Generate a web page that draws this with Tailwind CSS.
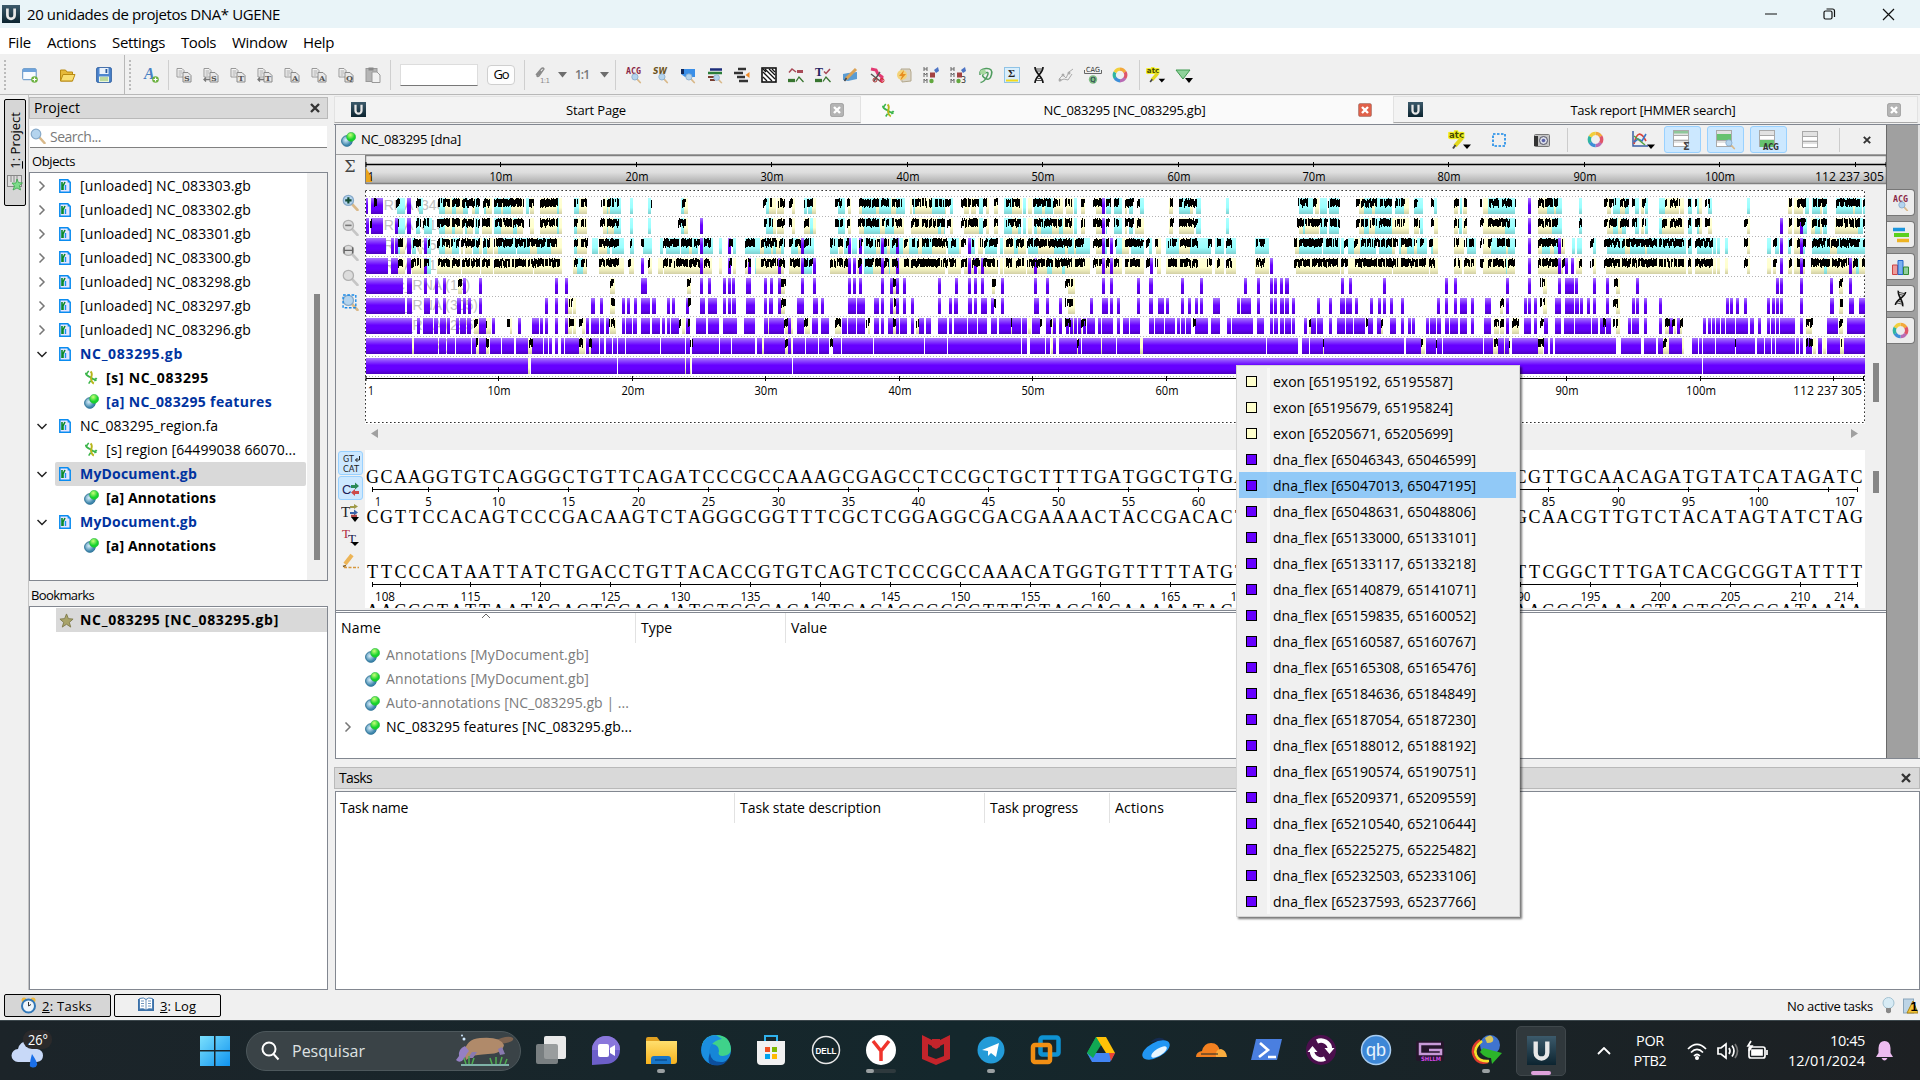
<!DOCTYPE html>
<html lang="pt-BR">
<head>
<meta charset="utf-8">
<title>20 unidades de projetos DNA* UGENE</title>
<script src="https://cdn.jsdelivr.net/npm/@tailwindcss/browser@4"></script>
</head>
<body class="w-[1920px] h-[1080px] overflow-hidden bg-[#f0f0f0] font-['Open_Sans','Noto_Sans',sans-serif] text-[14px] text-black leading-none">
<svg class="absolute w-0 h-0">
  <defs>
    <linearGradient id="gu" x2="0" y2="1"><stop stop-color="#3c5a6b"/><stop offset="1" stop-color="#0c2430"/></linearGradient>
    <linearGradient id="gp" x2="0" y2="1"><stop stop-color="#a878ff"/><stop offset=".45" stop-color="#6600ff"/><stop offset=".7" stop-color="#6600ff"/><stop offset="1" stop-color="#4c00bf"/></linearGradient>
    <linearGradient id="gy" x2="0" y2="1"><stop stop-color="#ffffd8"/><stop offset=".6" stop-color="#ffffcc"/><stop offset="1" stop-color="#d2cfa4"/></linearGradient>
    <linearGradient id="gc" x2="0" y2="1"><stop stop-color="#b0ffff"/><stop offset=".6" stop-color="#99ffff"/><stop offset="1" stop-color="#7fd0d0"/></linearGradient>
    <radialGradient id="gball" cx=".4" cy=".4"><stop stop-color="#d8eefa"/><stop offset="1" stop-color="#3f87ad"/></radialGradient>
    <radialGradient id="ggreen" cx=".4" cy=".3"><stop stop-color="#c8ff7a"/><stop offset="1" stop-color="#17d32c"/></radialGradient>
    <linearGradient id="gw" x2="1" y2="1"><stop stop-color="#7be0fd"/><stop offset="1" stop-color="#0f93ef"/></linearGradient>
    <linearGradient id="gfol" x2="0" y2="1"><stop stop-color="#ffdf6e"/><stop offset="1" stop-color="#f7b21d"/></linearGradient>
  </defs>
  <symbol id="u" viewBox="0 0 16 16"><rect width="16" height="16" fill="url(#gu)"/><path d="M4.8 3v6.2a3.2 3.2 0 0 0 6.4 0V3" fill="none" stroke="#e8e8e8" stroke-width="2.4"/></symbol>
  <symbol id="ann" viewBox="0 0 16 16"><circle cx="6.3" cy="9.6" r="5.7" fill="url(#gball)" stroke="#2f7397" stroke-width="1"/><circle cx="10.8" cy="5.2" r="4.8" fill="url(#ggreen)" stroke="#22b53a" stroke-width=".6"/></symbol>
  <symbol id="doc" viewBox="0 0 12 14"><path d="M.8.8h8L11.2 3.2V13.2H.8z" fill="#e6e6ff" stroke="#0a8cf0" stroke-width="1.5"/><path d="M8.6.5v3h3z" fill="#0a8cf0"/><path d="M3 3v8M6 3L4 7l0 4" stroke="#0b8a2b" stroke-width="1.6" fill="none"/><path d="M6.500 6v5" stroke="#1490f0" stroke-width="1.4"/></symbol>
  <symbol id="seq" viewBox="0 0 14 16"><path d="M1 3c0 4 3.500 3.500 6 5.500s4 2 5.500 0" fill="none" stroke="#3bb54a" stroke-width="2"/><path d="M6 1.500c3 2.500.5 5 .5 8 .3 2.500 1 4 3 5" fill="none" stroke="#b8b61a" stroke-width="2"/><path d="M1.500 4.500L4 1M10 11.500l2.500-1M4 14.500l2-3" stroke="#3bb54a" stroke-width="1.600"/></symbol>
  <symbol id="mag" viewBox="0 0 16 16"><path d="M9.500 9.500L14.500 15" stroke="#d9b98a" stroke-width="2.600" stroke-linecap="round"/><circle cx="6" cy="6" r="4.800" fill="#b4d4ee" stroke="#86a9c9" stroke-width="1.200"/></symbol>
  <symbol id="magg" viewBox="0 0 16 16"><path d="M9.500 9.500L14.500 15" stroke="#c6c6c6" stroke-width="2.600" stroke-linecap="round"/><circle cx="6" cy="6" r="4.800" fill="#dcdcdc" stroke="#b0b0b0" stroke-width="1.200"/></symbol>
  <symbol id="copy" viewBox="0 0 16 16"><path d="M1 1.500h5l2 2V10H1z" fill="#f4f4f4" stroke="#999"/><path d="M2.500 4h4M2.500 6h4M2.500 8h3" stroke="#aaa"/><path d="M7 5.500h5l3 3V15H7z" fill="#e8e8e8" stroke="#8a8a8a"/></symbol>
  <symbol id="ring" viewBox="0 0 16 16"><g fill="none" stroke-width="3.200"><path d="M8 2.200A5.800 5.800 0 0 1 13 5.200" stroke="#f3a83b"/><path d="M13 5.100a5.800 5.800 0 0 1-.3 6.200" stroke="#e0556a"/><path d="M12.800 11.200A5.800 5.800 0 0 1 8 13.800" stroke="#b86bb5"/><path d="M8 13.800a5.800 5.800 0 0 1-5-3" stroke="#3c8ed8"/><path d="M3.100 11A5.800 5.800 0 0 1 3 5.200" stroke="#30b5a2"/><path d="M3 5.300A5.800 5.800 0 0 1 8 2.200" stroke="#f1cf3c"/></g></symbol>
  <symbol id="close" viewBox="0 0 14 14"><rect x=".5" y=".5" width="13" height="13" rx="1.500" fill="currentColor" stroke="#0003"/><path d="M4 4l6 6M10 4l-6 6" stroke="#fff" stroke-width="2.400"/></symbol>
  <symbol id="x" viewBox="0 0 8 8"><path d="M.8.8l6.400 6.400M7.200.8L.8 7.200" stroke="#333" stroke-width="1.900"/></symbol>
  <symbol id="dna" viewBox="0 0 16 16"><path d="M4 0c0 7 8 9 8 16M12 0c0 7-8 9-8 16" fill="none" stroke="#111" stroke-width="1.700"/><path d="M4.500 2h7M5 13.500h6M6 4h4M6.500 11.500h4" stroke="#333" stroke-width=".9"/></symbol>
  <symbol id="atc" viewBox="0 0 24 20"><text x="1" y="8" font-family="DejaVu Sans" font-weight="bold" font-size="8.500" textLength="15" lengthAdjust="spacingAndGlyphs" fill="#4a4a00" stroke="#f0ee20" stroke-width="2.500" paint-order="stroke">atc</text><path d="M14 8L7 16" stroke="#e3d81c" stroke-width="4"/><path d="M7.500 15L5 18.500" stroke="#444" stroke-width="2"/><path d="M15 14.500h8l-4 4.500z" fill="#000"/></symbol>
  <symbol id="win" viewBox="0 0 16 18"><rect x=".5" y=".5" width="15" height="16" fill="#fff" stroke="#a9a9a9"/><path d="M1 1h14v4H1zM1 9h14v4H1z" fill="#e2e2e2"/><path d="M0 5.500h16M0 10.500h16" stroke="#a9a9a9"/></symbol>
</svg>

<div class="flex flex-col h-[1080px]">
  <!-- title bar -->
  <div class="h-[28px] shrink-0 bg-[#e9f4f8] flex items-center pl-[2px]">
    <svg class="w-[18px] h-[22px]" viewBox="0 0 18 22" preserveAspectRatio="none"><use href="#u" y="2" width="18" height="18"/></svg>
    <span data-w="253" class="ml-[7px] text-[15px]">20 unidades de projetos DNA* UGENE</span>
    <svg class="ml-auto w-[140px] h-[16px] mr-[22px]" viewBox="0 0 140 16" fill="none" stroke="#111" stroke-width="1.200"><path d="M7 8h12M125 3l11 11M136 3l-11 11"/><rect x="66" y="5" width="8" height="8" rx="1.500"/><path d="M68.500 3h6q2 0 2 2v6"/></svg>
  </div>
  <!-- menu bar -->
  <div class="h-[27px] shrink-0 bg-white flex items-center pt-[3px] text-[15px] pl-[8px] border-b border-[#f0f0f0]">
    <span data-w="23" class="mr-[16px]">File</span><span data-w="49" class="mr-[16px]">Actions</span><span data-w="53" class="mr-[16px]">Settings</span><span data-w="35" class="mr-[16px]">Tools</span><span data-w="55" class="mr-[16px]">Window</span><span data-w="31">Help</span>
  </div>
  <!-- toolbar -->
  <div class="h-[40px] shrink-0 flex items-center border-b border-[#b8b8b8] pl-[4px] pb-0">
    <div class="h-[30px] border-l-2 border-dotted border-[#bbb] mr-[16px]"></div>
    <svg class="w-[16px] h-[16px] mr-[21px]" viewBox="0 0 16 16"><rect x=".7" y="1.700" width="13.500" height="11" rx="1" fill="#f7fbff" stroke="#5b8fc4"/><path d="M1 2h13v3H1z" fill="#6ea3dc"/><circle cx="12.500" cy="12.500" r="3.300" fill="#6bb13f"/><path d="M12.500 10.500v4M10.500 12.500h4" stroke="#fff" stroke-width="1.200"/></svg>
    <svg class="w-[17px] h-[16px] mr-[20px]" viewBox="0 0 16 16"><path d="M1 3h5l1.500 2H13v9H1z" fill="#e6b93a" stroke="#b98a12"/><path d="M3.500 7.500H15.500L13 14H1z" fill="#f9de72" stroke="#b98a12"/></svg>
    <svg class="w-[16px] h-[16px] mr-[12px]" viewBox="0 0 16 16"><rect x=".7" y=".7" width="14.600" height="14.600" rx="1" fill="#4d86cf" stroke="#2b5c9e"/><rect x="3.500" y="1" width="9" height="6" fill="#eaf2fb"/><rect x="3" y="9.500" width="10" height="5.500" fill="#e9f6dc"/><path d="M4 11h8M4 13h8" stroke="#8dbb5e"/><rect x="9.500" y="2" width="1.800" height="4" fill="#2b5c9e"/></svg>
    <div class="w-px h-full bg-[#b8b8b8] mr-[4px]"></div>
    <div class="h-[30px] border-l-2 border-dotted border-[#bbb] mr-[12px]"></div>
    <svg class="w-[16px] h-[16px] mr-[9px]" viewBox="0 0 16 16"><text x="1" y="12" font-family="Liberation Serif" font-style="italic" font-weight="bold" font-size="16" fill="#4880c4">A</text><circle cx="12.500" cy="12.500" r="3.300" fill="#6bb13f"/><path d="M12.500 10.500v4M10.500 12.500h4" stroke="#fff" stroke-width="1.200"/></svg>
    <div class="w-px h-[30px] bg-[#cfcfcf] mr-[2px]"></div>
    <div id="copies" class="flex"></div>
    <svg class="w-[16px] h-[16px] mx-[5px]" viewBox="0 0 16 16"><rect x="1" y="1.500" width="11" height="13" fill="#b5b5b5" stroke="#999"/><rect x="3.500" y=".5" width="5" height="3" fill="#888"/><path d="M7 5h5l3 3v7.500H7z" fill="#f2f2f2" stroke="#999"/></svg>
    <div class="w-px h-[30px] bg-[#cfcfcf] ml-[4px] mr-[9px]"></div>
    <div class="w-[78px] h-[22px] bg-white border border-[#ddd] border-b-[#777]"></div>
    <div class="ml-[9px] w-[28px] h-[20px] rounded-[4px] border border-[#cfcfcf] bg-[#fdfdfd] flex items-center justify-center text-[13px]"><span data-w="15">Go</span></div>
    <div class="w-px h-[30px] bg-[#cfcfcf] ml-[9px] mr-[8px]"></div>
    <svg class="w-[18px] h-[18px]" viewBox="0 0 18 18"><path d="M3 9l5-6q2-2 3 0l-5 7q-1.500 1-2 0l4-5" fill="none" stroke="#8a8a8a" stroke-width="1.400"/><text x="7" y="17" font-family="DejaVu Sans" font-size="7" textLength="10" fill="#8a8a8a">1:1</text></svg>
    <svg class="w-[9px] h-[6px] ml-[7px] mr-[8px]" viewBox="0 0 9 6"><path d="M0 0h9L4.500 5.500z" fill="#6d6d6d"/></svg>
    <span data-w="14" class="text-[12px] font-semibold text-[#777]">1:1</span>
    <svg class="w-[9px] h-[6px] ml-[11px] mr-[6px]" viewBox="0 0 9 6"><path d="M0 0h9L4.500 5.500z" fill="#6d6d6d"/></svg>
    <div class="w-px h-[30px] bg-[#cfcfcf] mr-[4px]"></div>
    <div class="flex *:w-4 *:h-4 *:mx-[5.5px] *:overflow-visible">
      <svg viewBox="0 0 16 16"><text x="0" y="7" font-family="DejaVu Sans Mono" font-weight="bold" font-size="8" textLength="15" lengthAdjust="spacingAndGlyphs" fill="#8a2746">ACG</text><g transform="translate(5 6) scale(.65)"><use href="#mag" width="16" height="16"/></g></svg>
      <svg viewBox="0 0 16 16"><text x="0" y="7" font-family="DejaVu Sans" font-weight="bold" font-style="italic" font-size="9" textLength="14" lengthAdjust="spacingAndGlyphs" fill="#6b5320">SW</text><g transform="translate(5 6) scale(.65)"><use href="#mag" width="16" height="16"/></g></svg>
      <svg viewBox="0 0 16 16"><path d="M1 2h14v8H5L1 7z" fill="#3a8fe8"/><path d="M1 2h3v5H1z" fill="#10285a"/><g transform="translate(5 6) scale(.65)"><use href="#mag" width="16" height="16"/></g></svg>
      <svg viewBox="0 0 16 16"><path d="M3 2.500h12" stroke="#1c2d7a" stroke-width="2.500"/><path d="M1 6h14" stroke="#2a7d3a" stroke-width="2.500"/><path d="M1 10h8M3 13h5" stroke="#7a3e31" stroke-width="2"/><g transform="translate(6 7) scale(.6)"><use href="#mag" width="16" height="16"/></g></svg>
      <svg viewBox="0 0 16 16"><path d="M4 2h8M0 6h9M3 10h8M5 14h9" stroke="#333" stroke-width="2.600"/><path d="M15.500 5v6l-4-3z" fill="#f08a24"/></svg>
      <svg viewBox="0 0 16 16"><rect x="1" y="1" width="14" height="14" fill="#fff" stroke="#111" stroke-width="1.600"/><path d="M2 5l9 9M2 10l4 4M4 2l10 10M8 2l6 6M11 2l3 3M2 2l3 3" stroke="#111" stroke-width="1.300"/></svg>
      <svg viewBox="0 0 16 16"><path d="M1 5.500l3-3.500 4 3" fill="none" stroke="#a84a57" stroke-width="1.500"/><path d="M9 4.500h6" stroke="#a84a57" stroke-width="3"/><path d="M0 13.500h7" stroke="#37752f" stroke-width="3.300"/><path d="M8 14.500l3-4.500 4.500 5" stroke="#37752f" stroke-width="1.300" fill="none"/></svg>
      <svg viewBox="0 0 16 16"><text x="0" y="9" font-family="Liberation Serif" font-weight="bold" font-size="12" fill="#23235e">T</text><path d="M9 4.500l2 2 4-4.500" fill="none" stroke="#a84a57" stroke-width="1.500"/><path d="M0 13.500h7" stroke="#37752f" stroke-width="3.300"/><path d="M8 14.500l3-4.500 4.500 5" stroke="#37752f" stroke-width="1.300" fill="none"/></svg>
      <svg viewBox="0 0 16 16"><path d="M1 7l5-1 9-1v7l-9 2-5-1z" fill="#5b9cd2"/><path d="M4 12L14 2" stroke="#dba255" stroke-width="3"/><path d="M2.500 14l2-3" stroke="#444" stroke-width="1.500"/></svg>
      <svg viewBox="0 0 16 16"><path d="M2 2l5 1 2 4 4 3-1 5" stroke="#e23a72" stroke-width="3" fill="none"/><path d="M2 7l9 7M11 5l-6 9" stroke="#555" stroke-width="1.400"/><circle cx="6" cy="13" r="2" stroke="#a33" fill="none"/><circle cx="13" cy="13.500" r="2" stroke="#c33" fill="none"/></svg>
      <svg viewBox="0 0 16 16"><path d="M5 2h9l1 3v9l-9 1z" fill="#d9d4c8" stroke="#b4a88c"/><circle cx="6" cy="8" r="5" fill="#f3d37a"/><path d="M8 3L3 9h3l-2 5 6-7H7z" fill="#e88d1f"/></svg>
      <svg viewBox="0 0 16 16"><g id="hmm"><path d="M1 0v4M4 0v4M1 2h3M1 10V6l1.500 2L4 6v4M1 16v-4l1.500 2L4 12v4" stroke="#666" stroke-width="1" fill="none"/><path d="M11 3l4-3 1 4-3 2z" fill="#4d74c4"/><rect x="7" y="5.500" width="5" height="5" fill="#a34242"/><circle cx="8.500" cy="14" r="2.200" fill="#62a83f"/></g></svg>
      <svg viewBox="0 0 16 16"><use href="#hmm"/><text x="11" y="16" font-family="DejaVu Sans" font-size="8" fill="#333">3</text></svg>
      <svg viewBox="0 0 16 16"><path d="M3 8q-1-6 6-6.500t5.500 6-6 4-2-4.500 4-1.500-1 5-6 5" fill="none" stroke="#4f9c5e" stroke-width="1.500"/><ellipse cx="6" cy="5" rx="3" ry="2.500" fill="#a8d9a0"/></svg>
      <svg viewBox="0 0 16 16"><rect x=".5" y=".5" width="15" height="15" fill="#d9eefb" stroke="#8fc3e6"/><text x="4" y="10" font-family="Liberation Serif" font-weight="bold" font-size="11" fill="#222">Σ</text><path d="M2 13.500h12" stroke="#f0da1d" stroke-width="2"/></svg>
      <svg viewBox="0 0 16 16"><use href="#dna"/></svg>
      <svg viewBox="0 0 16 16"><path d="M1 12l4-4 3 3 3-6 4-3M1 14l5-2 4 1 4-6" fill="none" stroke="#aaa"/><circle cx="5" cy="8" r="1.500" fill="#aaa"/><circle cx="11" cy="6" r="1.500" fill="#aaa"/><circle cx="2" cy="13" r="1.500" fill="#aaa"/></svg>
      <svg viewBox="0 0 16 16"><text x="1" y="5" font-family="DejaVu Sans" font-size="7" textLength="14" lengthAdjust="spacingAndGlyphs" fill="#333">CAG</text><path d="M-.5 3v3.500h17V3" fill="none" stroke="#666"/><circle cx="8" cy="12.500" r="4.200" fill="#7fbd84"/><text x="5.300" y="15" font-family="DejaVu Sans" font-size="7" fill="#124">Q</text></svg>
      <svg viewBox="0 0 16 16"><use href="#ring"/></svg>
    </div>
    <div class="w-px h-[30px] bg-[#cfcfcf] ml-[6px] mr-[6px]"></div>
    <svg class="w-[20px] h-[18px] mr-[9px]"><use href="#atc"/></svg>
    <svg class="w-[18px] h-[16px]" viewBox="0 0 18 16"><path d="M1 3h14l-7 9z" fill="#8fd19a" stroke="#3f9b50"/><path d="M10 11h8l-4 5z"/></svg>
  </div>

  <!-- workspace -->
  <div class="flex-1 min-h-0 flex">
    <div class="w-[29px] shrink-0 border-r border-[#c4c4c4]">
      <div class="ml-[4px] mt-[4px] w-[22px] h-[107px] bg-[#d6d6d6] border-[1.5px] border-black rounded-[2px] flex flex-col items-center">
        <span class="[writing-mode:vertical-rl] rotate-180 mt-[12px] text-[13px] leading-[16px]"><u>1</u>: Project</span>
        <svg class="w-[16px] h-[16px] mt-[6px]" viewBox="0 0 16 16"><rect x=".5" y=".5" width="14" height="11" fill="#ddd" stroke="#888"/><path d="M4 1v6M7 1v6M10 1v6" stroke="#888"/><path d="M10 4l1.500 3.500 4 .5-3 2.500 1 4.500-3.500-2-4 2 1.500-4-2.500-3h4z" fill="#7ddc8a" stroke="#2f9e44" stroke-width=".7"/></svg>
      </div>
    </div>
    <!-- project panel -->
    <div class="w-[305px] shrink-0 flex flex-col pt-[2px] pr-[6px]">
      <div class="h-[22px] bg-[#d9d9d9] border border-[#b9b9b9] flex items-center pl-[4px] pr-[7px] pt-px justify-between text-[14px]"><span data-w="46">Project</span><svg class="w-[10px] h-[10px]"><use href="#x"/></svg></div>
      <div class="mt-[7px] ml-px mr-[1px] h-[22px] bg-white border-b border-[#808080] flex items-center text-[#7a7a7a] text-[14px]"><svg class="w-[16px] h-[16px]"><use href="#mag"/></svg><span data-w="51" class="ml-[4px] pt-px">Search...</span></div>
      <div class="h-[24px] pl-[3px] pt-[4px] flex items-center text-[13px]"><span data-w="43">Objects</span></div>
      <div class="h-[410px] border border-[#828790] bg-white flex">
        <div id="tree" class="w-[277px] pt-px"></div>
        <div class="w-[20px] bg-[#f0f0f0] pt-[121px] pl-[7px]"><div class="w-[6px] h-[266px] bg-[#868686]"></div></div>
      </div>
      <div class="h-[25px] pl-[2px] pt-[4px] flex items-center text-[13px]"><span data-w="63">Bookmarks</span></div>
      <div class="h-[384px] border border-[#828790] bg-white pt-px">
        <div class="ml-[26px] h-[24px] bg-[#d9d9d9] flex items-center pl-[3px] font-bold"><svg class="w-[15px] h-[15px]" viewBox="0 0 16 16"><path d="M8 1l2 5 5 .5-4 3.500 1.500 5L8 12l-4.500 3L5 10 1 6.500 6 6z" fill="#a9a46a" stroke="#807c4e"/></svg><span data-w="199" class="ml-[6px]">NC_083295 [NC_083295.gb]</span></div>
      </div>
    </div>
    <!-- main -->
    <div class="flex-1 min-w-0 flex flex-col">
      <div class="h-[30px] shrink-0 border-b border-[#828790] flex items-stretch text-[13px] pt-px">
        <div class="w-[527px] mb-px bg-[#f3f3f3] border border-[#e2e2e2] border-b-[#a8a8a8] flex items-center pl-[16px] pr-[16px] justify-between"><svg class="w-[15px] h-[15px]"><use href="#u"/></svg><span data-w="60" class="relative -left-[2px] pt-[2px]">Start Page</span><svg class="w-[14px] h-[14px] text-[#b4b4b4]"><use href="#close"/></svg></div>
        <div class="w-[532px] bg-[#fafafa] flex items-center pl-[21px] pr-[21px] justify-between"><svg class="w-[13px] h-[15px]"><use href="#seq"/></svg><span data-w="162" class="relative -left-[2px]">NC_083295 [NC_083295.gb]</span><svg class="w-[14px] h-[14px] text-[#e0614a]"><use href="#close"/></svg></div>
        <div class="flex-1 mr-[2px] mb-px bg-[#f3f3f3] border border-[#e2e2e2] border-b-[#a8a8a8] flex items-center pl-[14px] pr-[16px] justify-between"><svg class="w-[15px] h-[15px]"><use href="#u"/></svg><span data-w="165" class="relative -left-[2px] pt-[2px]">Task report [HMMER search]</span><svg class="w-[14px] h-[14px] text-[#b4b4b4]"><use href="#close"/></svg></div>
      </div>
      <div class="h-[634px] shrink-0 flex border-l border-[#828790] ml-px border-b border-b-[#828790]">
        <div class="w-[1551px] flex flex-col border-r border-[#696969]">
          <!-- sequence header -->
          <div class="h-[30px] shrink-0 border-b border-[#a0a0a0] flex items-center pl-[5px]">
            <svg class="w-[15px] h-[15px]"><use href="#ann"/></svg>
            <span data-w="100" class="ml-[5px] text-[13px]">NC_083295 [dna]</span>
            <div class="ml-auto mr-[15px] flex items-center">
              <svg class="w-[24px] h-[20px] mr-[20px]"><use href="#atc"/></svg>
              <svg class="w-[14px] h-[14px] mr-[28px]" viewBox="0 0 14 14"><rect x="1" y="1" width="12" height="12" fill="none" stroke="#1688e8" stroke-width="1.600" stroke-dasharray="2.500 1.500"/></svg>
              <svg class="w-[16px] h-[14px] mr-[17px]" viewBox="0 0 16 14"><rect x=".5" y="1.500" width="15" height="12" rx="1" fill="#c4c4c4" stroke="#777"/><path d="M0 3h4v10H0z" fill="#333"/><circle cx="9.500" cy="7.500" r="4" fill="#d8dce8" stroke="#556"/><circle cx="9.500" cy="7.500" r="1.800" fill="#5b62a8"/></svg>
              <div class="w-px h-[24px] bg-[#ccc] mr-[19px]"></div>
              <svg class="w-[17px] h-[17px] mr-[27px]"><use href="#ring"/></svg>
              <svg class="w-[24px] h-[20px] mr-[9px]" viewBox="0 0 24 20"><path d="M2 1v15h15" fill="none" stroke="#3a5fa5" stroke-width="1.500"/><path d="M3 14Q7-4 15 11" stroke="#d9453b" fill="none" stroke-width="1.700"/><path d="M3 12l4-3 4 2 4-7" stroke="#3a78c9" fill="none" stroke-width="1.600"/><path d="M3 6l11 9" stroke="#55a345" stroke-width="1.500"/><path d="M16 14.500h8l-4 4.500z"/></svg>
              <div class="w-[37px] h-[27px] rounded-[3px] bg-[#cce8ff] border border-[#99d1ff] flex items-center justify-center mr-[6px]"><svg class="w-[20px] h-[20px]" viewBox="0 0 20 20"><use href="#win" width="16" height="18"/><path d="M1 1h14v2.500H1z" fill="#8fc79a"/><text x="10" y="19.500" font-family="DejaVu Sans" font-weight="bold" font-size="10" fill="#444">Σ</text></svg></div>
              <div class="w-[37px] h-[27px] rounded-[3px] bg-[#cce8ff] border border-[#99d1ff] flex items-center justify-center mr-[6px]"><svg class="w-[20px] h-[20px]" viewBox="0 0 20 20"><use href="#win" width="16" height="18"/><path d="M1 4h14v6H1z" fill="#66c26f"/><g transform="translate(9 9) scale(.65)"><use href="#mag" width="16" height="16"/></g></svg></div>
              <div class="w-[37px] h-[27px] rounded-[3px] bg-[#cce8ff] border border-[#99d1ff] flex items-center justify-center mr-[15px]"><svg class="w-[20px] h-[20px]" viewBox="0 0 20 20"><use href="#win" width="16" height="18"/><path d="M1 10h14v7H1z" fill="#66c26f"/><text x="4" y="19.500" font-family="DejaVu Sans" font-weight="bold" font-size="8" textLength="16" lengthAdjust="spacingAndGlyphs" fill="#333">ACG</text></svg></div>
              <svg class="w-[16px] h-[18px] mr-[21px]"><use href="#win"/></svg>
              <div class="w-px h-[24px] bg-[#ccc] mr-[23px]"></div>
              <svg class="w-[8px] h-[8px]"><use href="#x"/></svg>
            </div>
          </div>
          <div class="h-[455px] shrink-0 flex overflow-hidden">
            <div class="w-[29px] shrink-0 flex flex-col items-center pt-[3px] pr-px">
              <div class="text-[16px] text-[#444] h-[18px] leading-[18px] font-['DejaVu_Serif',serif] mb-[18px]">Σ</div>
              <svg class="w-[17px] h-[17px] mb-[8px]" viewBox="0 0 16 16"><use href="#mag"/><path d="M3 6h6M6 3v6" stroke="#124a35" stroke-width="2"/></svg>
              <svg class="w-[17px] h-[17px] mb-[8px]" viewBox="0 0 16 16"><use href="#magg"/><path d="M3 6h6" stroke="#777" stroke-width="1.500"/></svg>
              <svg class="w-[17px] h-[17px] mb-[8px]" viewBox="0 0 16 16"><use href="#magg"/><path d="M2 3v6M10 3v6M2 6h8" stroke="#666" stroke-width="1.300"/></svg>
              <svg class="w-[17px] h-[17px] mb-[8px]" viewBox="0 0 16 16"><use href="#magg"/></svg>
              <svg class="w-[17px] h-[17px] mb-[140px]" viewBox="0 0 16 16"><use href="#mag"/><rect x="1" y="1" width="12" height="12" fill="none" stroke="#1688e8" stroke-width="1.300" stroke-dasharray="2.500 1.500"/></svg>
              <div class="w-[25px] h-[24px] mb-px rounded-[3px] bg-[#cce8ff] border border-[#99d1ff]"><svg viewBox="0 0 23 22" font-family="DejaVu Sans" font-size="8" fill="#222"><text x="4" y="10" textLength="11" lengthAdjust="spacingAndGlyphs">GT</text><path d="M20.500 4v4h-4m2-2l-2 2 2 2" fill="none" stroke="#222"/><text x="4" y="20" textLength="16" lengthAdjust="spacingAndGlyphs">CAT</text></svg></div>
              <div class="w-[25px] h-[24px] rounded-[3px] bg-[#cce8ff] border border-[#99d1ff]"><svg viewBox="0 0 23 22"><text x="3" y="17" font-family="Liberation Sans" font-size="13" fill="#1c1c55">C</text><path d="M12 8h4V5.500l4 3.500-4 3.500V11h-4z" fill="#2b8a57"/><path d="M20 14h-4v-2l-4 3.500 4 3.500V17h4z" fill="#cc4a4a"/></svg></div>
              <svg class="w-[19px] h-[18px] mt-[4px]" viewBox="0 0 19 18"><text x="0" y="13" font-family="Liberation Serif" font-size="15" fill="#222">T</text><path d="M9 2h4V0l4 2.500L13 5V4H9z" fill="#a09b4a"/><path d="M9 8h4V5.500l4 3-4 3V10H9z" fill="#3a62a8"/><path d="M10 12h6" stroke="#b14444" stroke-width="2.500"/><path d="M10 13h8l-4 5z"/></svg>
              <svg class="w-[19px] h-[18px] mt-[6px]" viewBox="0 0 19 18"><text x="1" y="10" font-family="Liberation Serif" font-size="13" fill="#b22b3b">T</text><text x="7" y="15" font-family="Liberation Serif" font-size="13" fill="#15154a">T</text><path d="M10 14h8l-4 4z"/></svg>
              <svg class="w-[17px] h-[16px] mt-[7px]" viewBox="0 0 17 16"><path d="M3 11L10 2" stroke="#ecb456" stroke-width="4"/><path d="M1 13.500l3-1" stroke="#805a1e" stroke-width="1.500"/><path d="M2 14.500h15" stroke="#d6973c" stroke-width="1.500" stroke-dasharray="3 1.500"/></svg>
            </div>
            <div class="w-[1521px] flex flex-col">
              <svg id="overview" class="w-[1522px] h-[295px] block shrink-0" viewBox="365 155 1522 295"></svg>
              <div class="flex">
                <svg id="detail" class="w-[1500px] h-[158px] bg-white block" viewBox="365 450 1500 158"></svg>
                <div class="ml-[8px] mt-[21px] w-[6px] h-[22px] bg-[#868686]"></div>
              </div>
            </div>
          </div>
          <!-- annotation tree -->
          <div class="flex-1 bg-white border-t-[3px] border-double border-[#828790] text-[14px]">
            <div class="relative h-[30px] flex items-center">
              <div class="w-[300px] h-full pl-[5px] border-r border-[#e2e2e2] flex items-center"><span data-w="40">Name</span></div>
              <div class="w-[150px] h-full pl-[5px] border-r border-[#e2e2e2] flex items-center"><span data-w="31">Type</span></div>
              <span data-w="36" class="ml-[5px]">Value</span>
              <svg class="absolute left-[145px] top-0 w-[10px] h-[6px]" viewBox="0 0 10 6"><path d="M1 5l4-4 4 4" fill="none" stroke="#666"/></svg>
            </div>
            <div id="anns"></div>
          </div>
        </div>
        <!-- right strip -->
        <div class="flex-1 bg-[#a0a0a0] pt-[64px] border-r-2 border-[#e0e0e0]">
          <div class="flex flex-col gap-[5px] *:w-[28px] *:h-[27px] *:bg-[#ececec] *:rounded-r-[4px] *:border *:border-[#777] *:border-l-0 *:flex *:items-center *:justify-center">
            <div><svg class="w-[16px] h-[16px]" viewBox="0 0 16 16"><text x="0" y="7" font-family="DejaVu Sans Mono" font-weight="bold" font-size="8" textLength="15" lengthAdjust="spacingAndGlyphs" fill="#8a2746">ACG</text><g transform="translate(5 6) scale(.65)"><use href="#mag" width="16" height="16"/></g></svg></div>
            <div><svg class="w-[16px] h-[16px]" viewBox="0 0 16 16"><path d="M0 2.500h12" stroke="#1b95dc" stroke-width="3.500"/><path d="M1 8h15" stroke="#5ad01e" stroke-width="4"/><path d="M4 13.500h12" stroke="#edb322" stroke-width="3.500"/></svg></div>
            <div><svg class="w-[17px] h-[16px]" viewBox="0 0 17 16"><path d="M.5 6h5v9.500h-5z" fill="#ee9a9a" stroke="#c44"/><path d="M6 1.500h5v14H6z" fill="#7ab0f0" stroke="#26c"/><path d="M11.500 8h5v7.500h-5z" fill="#8fcf9c" stroke="#383"/></svg></div>
            <div><svg class="w-[15px] h-[15px] rotate-12"><use href="#dna"/></svg></div>
            <div><svg class="w-[17px] h-[17px]"><use href="#ring"/></svg></div>
          </div>
        </div>
      </div>
      <!-- tasks dock -->
      <div class="mt-[8px] h-[22px] shrink-0 bg-[#d9d9d9] border border-[#b9b9b9] flex items-center justify-between pl-[4px] pr-[8px]"><span data-w="33" class="text-[14px]">Tasks</span><svg class="w-[10px] h-[10px]"><use href="#x"/></svg></div>
      <div class="flex-1 mt-[2px] ml-px bg-white border border-[#828790] text-[14px]">
        <div class="flex h-[31px] pt-px items-center *:h-full *:flex *:items-center *:border-r *:border-[#e2e2e2]">
          <div class="w-[399px] pl-[4px]"><span data-w="68">Task name</span></div>
          <div class="w-[250px] pl-[5px]"><span data-w="141">Task state description</span></div>
          <div class="w-[125px] pl-[5px]"><span data-w="88">Task progress</span></div>
          <div class="w-[200px] pl-[5px] !border-0"><span data-w="49">Actions</span></div>
        </div>
      </div>
    </div>
  </div>

  <!-- status bar -->
  <div class="h-[30px] shrink-0 flex items-center pl-[4px] pr-[2px] text-[13px]">
    <div class="w-[107px] h-[23px] bg-[#d6d6d6] border-[1.5px] border-black rounded-[2px] flex items-center pl-[15px] mr-[3px]"><svg class="w-[17px] h-[17px] mr-[5px]" viewBox="0 0 17 17"><circle cx="4" cy="3" r="2.500" fill="#f0b93c"/><circle cx="13" cy="3" r="2.500" fill="#f0b93c"/><circle cx="8.500" cy="9" r="6.500" fill="#eef5fb" stroke="#3278b8" stroke-width="2"/><path d="M8.500 5v4l2.500-1.500" stroke="#333" fill="none"/></svg><span data-w="50" class="pt-[2px]"><u>2</u>: Tasks</span></div>
    <div class="w-[107px] h-[23px] border-[1.5px] border-black rounded-[2px] flex items-center pl-[23px]"><svg class="w-[16px] h-[16px] mr-[6px]" viewBox="0 0 16 16"><path d="M0 2h16v12H0z" fill="#3a70a8"/><path d="M1.500 1.500Q6 0 8 2.500 10 0 14.500 1.500V12Q10 11 8 13 6 11 1.500 12z" fill="#fff" stroke="#4d7fb3"/><path d="M8 2.500V13M3 4h3M3 6.500h3M3 9h3M10 4h3M10 6.500h3M10 9h3" stroke="#6e94bb"/></svg><span data-w="36" class="pt-[2px]"><u>3</u>: Log</span></div>
    <span data-w="86" class="ml-auto mr-[8px] pt-[2px]">No active tasks</span>
    <svg class="w-[15px] h-[17px] mr-[7px]" viewBox="0 0 15 17"><circle cx="7.500" cy="6" r="5.500" fill="#d7ebf5" stroke="#a3c2d1"/><path d="M5 11h5v4q-2.500 2.500-5 0z" fill="#888"/></svg>
    <svg class="w-[15px] h-[17px]" viewBox="0 0 15 17"><rect x=".5" y="2" width="10" height="14" fill="#bcd4e6" stroke="#8aa6bb"/><path d="M10 4l5 12H4z" fill="#f3c63a" stroke="#a88316"/><text x="7.500" y="14" font-size="13" font-weight="bold" font-family="Liberation Sans">1</text></svg>
  </div>

  <!-- taskbar -->
  <div class="h-[60px] shrink-0 bg-gradient-to-r from-[#1c2429] via-[#14272c] to-[#1d2023] border-t border-[#3c474c] flex items-center text-white">
    <svg class="w-[46px] h-[44px] ml-[10px] shrink-0" viewBox="0 0 46 44"><path d="M8 33a6.500 6.500 0 0 1 0-13q2-8 10-8t9 8q6 1 6 6.500T27 33z" fill="#c8d9f8"/><path d="M22 25q6 9 5 11-1 3-4.500 2.500T20 35q0-3 2-10z" fill="#1a6fe8"/><rect x="13" y="1" width="29" height="19" rx="9" fill="#2b2a2b"/><text x="18" y="16" font-family="Open Sans" font-size="15" textLength="20" lengthAdjust="spacingAndGlyphs" fill="#fff">26°</text></svg>
    <svg class="w-[30px] h-[30px] ml-[144px] shrink-0" viewBox="0 0 30 30"><path d="M0 0h14v14H0zM15.500 0H30v14H15.500zM0 15.500h14V30H0zM15.500 15.500H30V30H15.500z" fill="url(#gw)"/></svg>
    <div class="ml-[16px] w-[275px] h-[40px] shrink-0 rounded-full bg-[#3a4347] border border-[#4d585c] flex items-center pl-[14px] text-[16px] text-[#dfe2e3]">
      <svg class="w-[19px] h-[20px] shrink-0" viewBox="0 0 19 20" fill="none" stroke="#fff" stroke-width="2"><circle cx="8" cy="8" r="6.500"/><path d="M12.500 13l5 5.500"/></svg>
      <span data-w="73" class="ml-[12px] leading-[22px]">Pesquisar</span>
      <svg class="w-[58px] h-[34px] ml-auto mr-[6px] shrink-0" viewBox="0 0 58 34"><path d="M36 8Q52 0 57 4q2 4-12 6z" fill="#7d6350"/><path d="M8 19Q10 5 24 4q20-2 24 7-2 9-16 9-12 1-16 2l-6 4z" fill="#b08a6a"/><path d="M9 12q-7 3-6 10l-3 4q4 4 8-1 3-6 5-8z" fill="#9580c4"/><path d="M16 18l-4 6h5l4-6zM42 15l2 6 5-1-3-7z" fill="#8a7ab0"/><path d="M5 31h48" stroke="#7fb2a8" stroke-width="2"/><path d="M10 30l-2-6M13 30v-8M16 30l2-6M36 30l-2-6M40 30v-7M44 30l2-7M49 30l2-5" stroke="#4fae52" stroke-width="1.500"/><circle cx="8" cy="5" r="1.500" fill="#cfe8ff"/><circle cx="6" cy="1.500" r="1" fill="#cfe8ff"/></svg>
    </div>
    <div class="ml-[14px] flex shrink-0 *:w-[32px] *:h-[48px] *:mr-[23px] *:shrink-0 *:overflow-visible">
      <svg viewBox="0 0 32 48"><rect x="9" y="9" width="22" height="23" rx="2" fill="#e9e9e9"/><rect x="1" y="17" width="22" height="20" rx="2" fill="#8b8f90" opacity=".85"/></svg>
      <svg viewBox="0 0 32 48"><path d="M2 38V23A14 14 0 1 1 16 37z" fill="#6c5fc9"/><path d="M16 9a14 14 0 0 1 14 14H2A14 14 0 0 1 16 9z" fill="#8a77db"/><rect x="8" y="17" width="11" height="13" rx="2" fill="#fff"/><path d="M20 21l5-3v11l-5-3z" fill="#fff"/></svg>
      <svg viewBox="0 0 32 48"><path d="M1 12q0-2 2-2h9l3 4h16v22H1z" fill="#e0a021"/><path d="M1 14h31v20q0 3-3 3H1z" fill="url(#gfol)"/><path d="M6 37v-5q0-3 3-3h14q3 0 3 3v5z" fill="#1976c8"/><path d="M10 33h12" stroke="#0b4f92" stroke-width="1.500"/><rect x="12" y="42" width="8" height="4" rx="2" fill="#9aa0a2"/></svg>
      <svg viewBox="0 0 32 48"><circle cx="16" cy="23" r="15" fill="#1686d8"/><path d="M2 18Q5 8 16 8q14 0 15 14 0 6-8 7-6 0-4-5 0-6-7-7-7 0-10 8z" fill="#3fd28a"/><path d="M2 18Q5 8 16 8l6 4q-14 2-13 18 2 5 6 8Q0 36 2 18z" fill="#1b8ee0"/><path d="M10 26q1 10 13 9 4-1 6-4-6 11-19 6-3-4 0-11z" fill="#0c4f9e"/></svg>
      <svg viewBox="0 0 32 48"><path d="M10 15V9h12v6" fill="none" stroke="#2fb1ec" stroke-width="2"/><path d="M2 14h28v20q0 4-4 4H6q-4 0-4-4z" fill="#f1f1f1"/><path d="M10 20h5v5h-5z" fill="#f25022"/><path d="M17 20h5v5h-5z" fill="#7fba00"/><path d="M10 27h5v5h-5z" fill="#00a4ef"/><path d="M17 27h5v5h-5z" fill="#ffb900"/></svg>
      <svg viewBox="0 0 32 48"><circle cx="16" cy="23" r="13.500" fill="none" stroke="#e8e8e8" stroke-width="1.500"/><text x="5.500" y="26.500" font-family="Liberation Sans" font-weight="bold" font-size="9.500" textLength="21" lengthAdjust="spacingAndGlyphs" fill="#fff">DELL</text></svg>
      <svg viewBox="0 0 32 48"><circle cx="16" cy="23" r="15" fill="#fff"/><path d="M8 14l8 10 8-10M16 23v11" fill="none" stroke="#f0342c" stroke-width="3.500"/><rect x="1" y="42" width="30" height="4" rx="2" fill="#2e393d"/><rect x="1" y="42" width="8" height="4" rx="2" fill="#9aa0a2"/></svg>
      <svg viewBox="0 0 32 48"><path d="M2 8l14 7 14-7v24l-14 6-14-6z" fill="#c4242b"/><path d="M8 17l8 4 8-4v12l-8 3-8-3z" fill="#1a262a"/><path d="M12 12h8v8l-4 2-4-2z" fill="#c4242b"/></svg>
      <svg viewBox="0 0 32 48"><circle cx="16" cy="23" r="13.500" fill="#239bd8"/><path d="M7 23l17-7-3 14-5-4-3 3v-5z" fill="#fff"/><rect x="12" y="42" width="8" height="4" rx="2" fill="#9aa0a2"/></svg>
      <svg viewBox="0 0 32 48" fill="none" stroke-width="4.500"><rect x="10.500" y="10.500" width="18" height="17" rx="2" stroke="#0e92d2"/><rect x="3" y="18" width="17" height="17" rx="2" stroke="#f18f14"/></svg>
      <svg viewBox="0 0 32 48"><path d="M11 10h10L11 34l-4 0-5-8z" fill="#11a853"/><path d="M11 10h10l9 16H20z" fill="#ffc107"/><path d="M2 26h28l-5 9H7z" fill="#4285f4"/><path d="M11 10l5 8-8 13-6-5z" fill="#11a853"/><path d="M24 26h6l-4 8z" fill="#ea4335"/><path d="M11 26l5-8 5 8z" fill="#15262b"/></svg>
      <svg viewBox="0 0 32 48"><path d="M10 15q10-8 16-1z" fill="#152c52"/><ellipse cx="16" cy="23" rx="15" ry="7.500" transform="rotate(-28 16 23)" fill="#2196f3"/><ellipse cx="19" cy="25" rx="9" ry="3.500" transform="rotate(-32 19 25)" fill="#e8f6ff"/></svg>
      <svg viewBox="0 0 32 48"><path d="M1 30q0-5 6-6 2-8 9-8 8 0 9 9v5z" fill="#f38020"/><path d="M21 30q-1-8 5-8 5 1 6 8z" fill="#faad3f"/><path d="M6 27h17" stroke="#1a262a" stroke-width="1"/></svg>
      <svg viewBox="0 0 32 48"><path d="M6 12h26l-5 21H1z" fill="#4a7fe0"/><path d="M10 16l8 7-9 7M18 30h8" fill="none" stroke="#fff" stroke-width="2.600"/></svg>
      <svg viewBox="0 0 32 48"><circle cx="16" cy="23" r="15" fill="#4b0f4d"/><path d="M12 14.500A9 9 0 0 1 25 22M20 31.500A9 9 0 0 1 7 24" fill="none" stroke="#fff" stroke-width="4.500"/><path d="M2.500 25l5-6 5 6zM19.500 21l5 6 5-6z" fill="#fff"/></svg>
      <svg viewBox="0 0 32 48"><circle cx="16" cy="23" r="14.500" fill="#3d87d6" stroke="#a9cdf0" stroke-width="1.500"/><text x="6" y="29" font-family="Liberation Sans" font-size="18" textLength="20" lengthAdjust="spacingAndGlyphs" fill="#e8f3fc">qb</text></svg>
      <svg viewBox="0 0 32 48"><rect x="1" y="14" width="28" height="20" rx="2" fill="#25152b"/><path d="M26 17H5v10h21v-4H14" fill="none" stroke="#c79ad8" stroke-width="2.500"/><text x="6" y="34" font-family="DejaVu Sans" font-weight="bold" font-size="6" textLength="20" lengthAdjust="spacingAndGlyphs" fill="#d04be8">SHLLM</text></svg>
      <svg viewBox="0 0 32 48"><circle cx="20" cy="18" r="10" fill="#3f74cf"/><path d="M15 11q6-5 8 0t-6 5z" fill="#d9c55a"/><path d="M10 13Q0 20 4 29t14 6" fill="none" stroke="#e23b2e" stroke-width="2.500"/><path d="M12 14Q3 21 6 28t13 6" fill="none" stroke="#f4e02c" stroke-width="2.500"/><path d="M13 21l19 5-10 11-1-6q-6 0-11-6z" fill="#2cb52a"/><rect x="12" y="42" width="8" height="4" rx="2" fill="#9aa0a2"/></svg>
    </div>
    <div class="-ml-[9px] w-[50px] h-[50px] shrink-0 rounded-[5px] bg-[#30383c] border border-[#3f474b] flex flex-col items-center pt-[9px]"><svg class="w-[29px] h-[29px]"><use href="#u"/></svg><div class="mt-[6px] w-[20px] h-[4px] rounded-full bg-[#dea2dc]"></div></div>
    <svg class="w-[14px] h-[8px] ml-auto" viewBox="0 0 14 8"><path d="M1 7l6-6 6 6" fill="none" stroke="#fff" stroke-width="1.800"/></svg>
    <div class="ml-[22px] w-[34px] text-center text-[14.5px] leading-[20px]"><span data-w="28">POR</span><br><span data-w="33">PTB2</span></div>
    <svg class="w-[82px] h-[22px] ml-[20px]" viewBox="0 0 82 22" fill="none" stroke="#fff" stroke-width="1.700"><path d="M1 9q9-9 18 0M4 12.500q6-6 12 0M7 16q3-3 6 0"/><circle cx="10" cy="18" r="1.200" fill="#fff"/><path d="M31 8h3l5-4v14l-5-4h-3zM42 8q2 3 0 6M45 5.500q4 5.500 0 11"/><path d="M48 4q5 7 0 14" stroke="#777"/><rect x="62" y="7" width="16" height="11" rx="2"/><path d="M65 10h10v5H65z" fill="#fff"/><path d="M80 10v5M64 1l-3 5h4l-3 5"/></svg>
    <div class="ml-[14px] w-[82px] text-right text-[14.5px] leading-[20px]"><span data-w="35">10:45</span><br><span data-w="77">12/01/2024</span></div>
    <svg class="w-[17px] h-[20px] ml-[11px] mr-[27px]" viewBox="0 0 17 20"><path d="M8.500 0Q14 0 14.500 7v5l2.500 4H0l2.500-4V7Q3 0 8.500 0zM5.500 17h6q-3 5-6 0z" fill="#edbcf0"/></svg>
  </div>
</div>

<!-- annotation context menu -->
<div id="menu" class="absolute left-[1236px] top-[365px] w-[284px] h-[552px] bg-[#f0f0f0] border border-[#d5d5d5] shadow-[2px_2px_2px_#0008] pt-[2px] px-[2px]"></div>

<script>
const $ = id => document.getElementById(id);

$('copies').innerHTML = ['S','S','T','T','A','A','Q'].map((c, i) =>
  `<svg class="w-[16px] h-[16px] ml-[5px] mr-[6px] shrink-0" viewBox="0 0 16 16"><use href="#copy"/><text x="8" y="14" font-family="DejaVu Serif" font-weight="bold" font-size="8" fill="#555">${c}</text>${i == 1 || i == 3 ? '<path d="M1 12.500h6M3 10.500l-2 2 2 2" fill="none" stroke="#777" stroke-width="1.300"/>' : ''}</svg>`).join('');

const chev = open => open
  ? '<svg class="w-[10px] h-[10px]" viewBox="0 0 10 10"><path d="M.5 3L5 7.500 9.500 3" fill="none" stroke="#222" stroke-width="1.500"/></svg>'
  : '<svg class="w-[10px] h-[10px]" viewBox="0 0 10 10"><path d="M2.500.5L7 5 2.500 9.500" fill="none" stroke="#777" stroke-width="1.500"/></svg>';
const docs = ['303','302','301','300','298','297','296'].map(n => [0, '[unloaded] NC_083' + n + '.gb', 171]);
const rows = [...docs,
  [1, 'NC_083295.gb', 103, 'font-bold text-[#0033a0]'],
  ['seq', '[s] NC_083295', 103, 'font-bold'],
  ['ann', '[a] NC_083295 features', 166, 'font-bold text-[#0033a0]'],
  [1, 'NC_083295_region.fa', 138, ''],
  ['seq', '[s] region [64499038 66070...', 190, ''],
  [1, 'MyDocument.gb', 117, 'font-bold text-[#0033a0]', 'bg-[#d9d9d9]'],
  ['ann', '[a] Annotations', 110, 'font-bold'],
  [1, 'MyDocument.gb', 117, 'font-bold text-[#0033a0]'],
  ['ann', '[a] Annotations', 110, 'font-bold']];
$('tree').innerHTML = rows.map(([k, t, w, cls = '', sel = '']) => typeof k == 'number'
  ? `<div class="flex h-[24px] items-center pl-[7px]">${chev(k)}<div class="ml-[8px] pl-[4px] w-[251px] h-[24px] rounded-[2px] flex items-center ${sel}"><svg class="w-[12px] h-[14px]"><use href="#doc"/></svg><span data-w="${w}" class="ml-[9px] text-[14px] ${cls}">${t}</span></div></div>`
  : `<div class="flex h-[24px] items-center pl-[54px]"><svg class="w-[15px] h-[15px]"><use href="#${k}"/></svg><span data-w="${w}" class="ml-[7px] text-[14px] ${cls}">${t}</span></div>`).join('');

$('anns').innerHTML = [['Annotations [MyDocument.gb]', 203], ['Annotations [MyDocument.gb]', 203], ['Auto-annotations [NC_083295.gb | ...', 243], ['NC_083295 features [NC_083295.gb...', 246]].map(([t, w], i) =>
  `<div class="flex h-[24px] items-center pl-[7px] ${i < 3 ? 'text-[#7b7b7b]' : ''}"><span class="w-[22px]">${i == 3 ? chev(0) : ''}</span><svg class="w-[15px] h-[15px]"><use href="#ann"/></svg><span data-w="${w}" class="ml-[6px]">${t}</span></div>`).join('');

$('menu').innerHTML = ['65195192, 65195587','65195679, 65195824','65205671, 65205699','65046343, 65046599','65047013, 65047195','65048631, 65048806','65133000, 65133101','65133117, 65133218','65140879, 65141071','65159835, 65160052','65160587, 65160767','65165308, 65165476','65184636, 65184849','65187054, 65187230','65188012, 65188192','65190574, 65190751','65209371, 65209559','65210540, 65210644','65225275, 65225482','65232503, 65233106','65237593, 65237766'].map((t, i) =>
  `<div class="h-[26px] flex items-center pl-[7px] w-[277px] ${i == 4 ? 'bg-[#91c9f7]' : ''}"><div class="w-[11px] h-[11px] border border-black ${i < 3 ? 'bg-[#ffffcc]' : 'bg-[#6600ff]'}"></div><div class="ml-[10px] w-[3px] h-full ${i == 4 ? 'bg-white/5' : 'bg-[#f8f8f8]'}"></div><span data-w="${i < 3 ? 180 : 203}" class="ml-[3px] pt-px text-[14px]">${i < 3 ? 'exon' : 'dna_flex'} [${t}]</span></div>`).join('');

// Annotation segments per row, in three tiles: [origin x, units per pixel, rows].
// p = dna_flex, y = exon, c = gene, b = arrow markers.
const tiles = [
 [330, 2.8, [
  'p100-105 115-148 216-227 c188-210 248-260 305-322 342-352 372-385 405-416 430-437 460-480 484-508 549-557 636-642 682-698 774-778 784-815 840-848 890-898 984-992 1222-1230 1328-1336 1338-1350 1422-1442 1490-1568 y322-342 352-372 398-405 437-453 480-484 508-540 560-570 588-636 642-650 698-702 704-720 764-774 778-784 992-1001 1230-1249 1252-1272 1294-1301 1350-1360 1450-1458 1482-1490 1530-1536 b122-131 186-195 242-254 302-334 342-364 370-384 386-398 400-418 428-446 460-496 498-542 558-570 588-637 682-694 702-718 758-770 775-808 898-901 985-996 1212-1222 1228-1240 1254-1272 1286-1296 1328-1352 1414-1436 1448-1456 1480-1516 1518-1536 1542-1568',
  'p100-110 114-148 182-190 216-227 1036-1044 c190-210 242-252 262-284 305-322 342-352 378-384 405-416 460-480 512-524 636-642 682-692 774-778 795-815 840-848 890-898 984-992 1222-1240 1343-1352 1422-1442 1494-1568 y322-342 350-372 384-400 425-453 480-512 524-540 560-570 588-636 642-650 692-702 704-720 764-774 778-795 992-1001 1240-1249 1252-1272 1294-1301 1327-1343 1352-1360 1450-1458 1480-1494 1540-1546 b112-117 189-195 240-254 260-276 300-334 342-364 370-398 400-418 426-446 462-508 512-542 556-566 588-637 682-694 702-718 756-770 775-808 898-901 975-996 1212-1222 1228-1240 1252-1272 1286-1296 1328-1343 1414-1436 1448-1456 1478-1496 1502-1536 1542-1568',
  'p100-157 171-178 182-190 216-227 263-272 1036-1044 1114-1122 1319-1327 1450-1459 1481-1490 1543-1551 c190-196 230-242 272-283 305-330 342-360 400-416 428-440 470-520 524-560 580-620 640-644 682-690 734-750 775-785 790-822 840-850 876-902 924-932 940-980 984-1030 1044-1072 1090-1098 1128-1137 1162-1250 1262-1272 1290-1310 1327-1356 1400-1422 1440-1450 1462-1476 1495-1530 y196-210 248-256 322-342 366-372 378-398 418-426 440-455 460-470 560-580 620-650 692-720 752-775 1004-1012 1205-1215 1236-1240 1250-1262 1310-1319 1424-1436 1530-1543 1551-1568 b190-202 232-254 274-278 300-334 340-362 368-396 398-418 428-446 460-512 518-548 552-635 682-694 702-720 752-780 782-808 840-848 868-878 932-948 950-975 984-1036 1046-1066 1118-1126 1162-1190 1206-1250 1256-1272 1286-1296 1302-1318 1326-1346 1400-1414 1422-1434 1446-1452 1480-1490 1498-1518 1526-1568',
  'p100-162 171-190 216-227 263-272 871-879 1036-1044 1114-1122 1170-1179 1254-1262 1319-1327 1352-1361 1450-1459 1464-1473 1481-1490 1543-1551 c272-283 692-708 1190-1194 1327-1350 1495-1520 y190-210 230-262 300-366 370-420 424-455 460-568 572-650 680-692 708-720 752-824 836-850 890-902 918-932 934-1036 1044-1070 1090-1098 1128-1137 1162-1170 1194-1254 1262-1272 1285-1319 1400-1450 1476-1481 1520-1543 1551-1568 b190-202 228-254 264-276 300-334 342-364 370-396 398-418 426-446 460-504 510-548 553-642 682-692 702-718 752-780 782-808 834-842 890-894 932-956 962-1036 1046-1066 1118-1124 1162-1178 1206-1252 1256-1272 1286-1314 1326-1352 1400-1436 1440-1450 1478-1490 1498-1522 1526-1568',
  'p100-204 216-229 263-272 294-302 316-325 372-381 417-426 630-638 658-666 871-888 1036-1044 1058-1066 1100-1108 1114-1122 1126-1134 1165-1179 1215-1224 1232-1240 1254-1262 1319-1327 1352-1361 1450-1459 1464-1473 1481-1490 1543-1551 y358-368 784-797 1000-1010 1264-1275 b358-368 784-794 1000-1010 1264-1275',
  'p100-210 216-229 263-280 294-302 316-325 356-367 372-381 386-395 417-426 602-610 630-638 658-666 731-742 756-764 818-826 832-840 851-860 871-896 902-913 944-952 958-966 997-1005 1036-1050 1058-1068 1070-1084 1100-1108 1114-1122 1126-1138 1165-1190 1215-1224 1229-1240 1254-1264 1308-1327 1352-1366 1375-1383 1450-1473 1476-1498 1523-1537 1543-1551 y666-676 680-689 784-797 1264-1275 b670-682 784-796 1002-1010 1264-1275',
  'p100-230 244-252 260-288 291-302 307-325 328-336 353-362 365-381 384-395 417-437 454-462 526-535 566-585 588-596 602-610 630-638 658-666 716-725 731-753 756-766 773-781 818-826 829-846 848-860 871-896 902-924 930-938 944-952 955-978 997-1008 1025-1053 1058-1089 1100-1124 1126-1140 1159-1190 1215-1226 1229-1272 1282-1291 1308-1327 1350-1366 1375-1397 1434-1448 1450-1473 1476-1498 1523-1537 1543-1551 1563-1568 y402-417 437-450 503-510 666-676 680-689 706-714 784-800 985-995 1227-1229 1274-1282 1291-1295 1330-1343 1414-1432 1506-1513 b402-412 437-441 495-503 670-682 698-706 782-796 978-988 1003-1008 1272-1280 1328-1336 1414-1430 1500-1510',
  'p100-230 235-302 305-325 328-350 353-395 398-409 417-437 448-479 482-515 521-554 566-596 599-610 613-622 630-638 647-655 658-697 716-725 731-753 756-766 773-790 793-803 806-826 829-924 927-994 997-1008 1014-1089 1092-1124 1126-1189 1196-1210 1215-1275 1282-1291 1296-1330 1333-1366 1369-1397 1408-1431 1434-1520 1523-1568 y230-235 409-417 437-445 554-564 697-714 726-731 1210-1215 1275-1281 1291-1294 b409-414 438-444 556-566 698-708 725-731 1008-1014 1274-1280 1400-1408',
  'p100-554 563-804 806-994 997-1008 1014-1294 1296-1568 y554-560 994-997 1008-1010']],
 [880, 2.904, [
  'p645-653 c0-32 45-73 95-101 150-188 203-212 288-299 360-382 415-424 447-470 478-502 564-572 655-670 680-702 722-734 756-767 868-900 918-931 1005-1013 1217-1257 1277-1299 1304-1333 1405-1430 1438-1486 1495-1512 1552-1568 y32-45 88-94 101-150 188-193 244-257 264-280 309-316 331-342 382-412 430-440 470-478 505-530 540-560 584-594 627-645 712-718 840-850 900-910 1264-1275 1391-1405 1430-1438 1512-1536 b2-26 36-62 91-134 142-150 160-178 184-204 236-250 256-287 299-310 328-340 366-408 444-496 502-522 538-556 584-594 618-642 655-668 680-694 712-736 746-756 842-852 868-922 1212-1242 1256-1268 1300-1333 1382-1392 1398-1442 1452-1486 1496-1508 1514-1530 1550-1568',
  'p645-653 c15-40 168-178 186-190 288-299 360-382 400-410 415-424 447-455 468-500 520-532 564-572 655-660 680-702 722-734 918-931 1005-1013 1228-1235 1277-1299 1304-1333 1405-1420 1438-1486 1552-1560 y0-15 40-70 90-168 178-186 203-212 244-287 309-316 331-342 382-400 430-440 455-468 500-520 532-560 584-594 627-645 712-718 740-767 840-850 868-912 1217-1228 1235-1275 1391-1405 1420-1438 1486-1536 b2-26 36-62 91-138 142-162 166-188 194-204 236-250 256-287 299-310 328-340 366-408 444-472 476-526 538-556 584-594 618-642 655-668 680-694 712-736 746-756 842-852 868-922 1212-1282 1288-1333 1382-1392 1398-1416 1424-1442 1448-1486 1496-1508 1514-1530 1550-1568',
  'p3-12 46-54 256-264 645-653 668-677 c0-3 12-20 30-46 54-68 84-110 122-150 197-228 264-275 305-340 348-357 388-400 430-460 505-536 545-562 570-610 653-660 684-702 728-767 782-790 830-868 900-960 974-998 1004-1034 1089-1130 1217-1282 1286-1336 1339-1346 1360-1440 1450-1488 1507-1568 y20-30 68-84 110-122 150-190 228-236 284-300 360-388 400-425 460-505 536-545 562-570 627-645 704-722 800-815 868-900 1204-1217 1376-1394 1488-1496 b12-26 36-50 70-80 94-100 106-116 122-148 152-197 206-220 236-250 266-272 288-312 316-340 366-386 396-416 428-444 446-512 514-556 566-592 618-642 655-664 682-688 712-764 772-782 798-806 836-862 870-902 906-922 950-962 978-990 1006-1022 1092-1118 1202-1286 1296-1328 1348-1358 1376-1388 1398-1430 1436-1464 1468-1486 1490-1504 1514-1568',
  'p3-12 46-54 256-264 273-282 293-301 447-456 645-653 668-677 784-792 1132-1141 c26-30 485-500 528-536 y12-26 30-46 54-190 197-236 244-256 264-273 284-293 301-342 348-357 360-424 428-447 456-485 500-528 536-610 627-645 653-668 677-702 710-767 805-815 830-963 974-998 1004-1034 1089-1130 1208-1300 1302-1336 1339-1346 1360-1486 1490-1568 b12-26 36-50 70-82 91-174 178-204 206-220 236-250 266-288 300-340 366-386 394-416 426-512 514-556 566-594 618-642 655-666 680-694 712-754 772-784 798-806 836-862 870-902 906-922 950-962 978-990 1006-1022 1092-1118 1202-1300 1302-1328 1338-1358 1376-1462 1464-1486 1488-1504 1512-1568',
  'p3-12 29-38 46-54 67-75 168-177 218-226 256-264 273-282 293-301 351-360 447-456 482-491 645-653 668-677 746-755 782-792 874-883 929-938 1057-1066 1095-1103 1132-1141 1144-1153 1161-1170 1176-1188 1339-1347 1362-1371 1461-1469 y38-45 325-334 545-566 b38-45 325-336 538-558',
  'p3-12 29-38 46-54 67-75 90-99 168-177 200-209 215-226 256-267 273-282 293-311 322-332 351-360 447-462 482-491 520-528 610-618 645-662 668-677 688-697 746-755 781-793 807-825 830-839 874-883 894-903 915-923 929-938 967-987 1037-1045 1048-1077 1095-1103 1132-1141 1144-1153 1161-1173 1176-1188 1196-1205 1269-1278 1304-1312 1336-1350 1353-1371 1379-1388 1423-1432 1447-1455 1461-1469 1481-1490 1513-1522 y38-45 545-566 b38-45 332-336 538-558',
  'p3-12 23-38 46-54 58-78 90-99 112-128 134-148 168-195 200-209 215-253 256-282 284-311 322-340 346-380 383-409 412-427 441-465 482-496 502-511 520-528 540-550 552-560 562-572 575-585 588-598 601-624 633-642 645-677 688-697 706-723 726-755 781-796 799-825 828-857 862-871 874-886 889-903 915-952 961-987 1008-1019 1022-1083 1095-1115 1132-1141 1144-1155 1161-1173 1176-1193 1196-1205 1231-1240 1251-1266 1269-1286 1304-1312 1327-1350 1353-1373 1376-1408 1417-1432 1443-1455 1481-1498 1513-1522 1533-1542 1545-1554 y38-45 104-112 380-383 430-438 498-502 560-562 585-588 1246-1251 1455-1461 b38-45 104-112 380-383 466-469 494-498 537-552 584-597 908-915 1246-1250 1411-1417 1455-1459',
  'p0-128 131-195 197-409 412-427 436-479 482-494 502-511 520-572 575-584 587-643 645-685 688-755 764-1121 1124-1214 1225-1246 1249-1286 1289-1522 1527-1568 y496-502 572-575 643-645 756-764 1286-1289 b572-575 1286-1289',
  'p0-1568']],
 [1400, 3, [
  'p384-393 c3-12 51-69 102-111 180-186 264-345 440-462 468-486 537-546 640-660 675-687 705-717 735-744 777-795 864-876 890-897 924-936 1041-1050 1215-1227 1236-1260 1270-1280 1308-1360 1366-1386 1389-1394 y12-27 162-174 189-201 249-264 414-440 462-468 621-633 660-675 723-732 795-837 840-852 897-906 1164-1176 1182-1209 1260-1266 1360-1366 b3-15 42-54 94-102 162-177 192-201 240-248 264-296 304-336 344-347 414-432 436-474 612-624 628-650 660-687 696-705 726-736 794-800 810-840 864-872 886-890 914-930 1166-1176 1190-1216 1236-1250 1254-1280 1308-1378 1388-1394',
  'p384-393 1140-1149 1200-1209 c60-69 176-186 315-345 455-486 537-546 640-654 665-678 705-717 735-744 777-786 864-876 890-897 1209-1221 1245-1260 1270-1280 1375-1389 y0-27 42-57 102-114 162-174 189-201 249-315 414-455 621-640 654-665 723-732 786-852 897-906 924-936 1041-1050 1164-1176 1182-1200 1233-1245 1260-1266 1306-1375 b3-15 42-54 94-102 162-177 192-201 240-252 264-328 344-347 414-432 436-474 537-546 612-624 628-650 660-687 696-710 726-736 786-800 810-844 864-872 886-900 914-930 1032-1042 1166-1176 1190-1216 1236-1250 1254-1280 1308-1378 1388-1394',
  'p384-393 474-483 1140-1149 1200-1209 c21-42 51-81 92-99 201-228 273-318 325-345 425-450 462-474 516-525 530-546 579-588 621-675 690-735 741-858 864-876 890-936 938-948 951-960 975-984 1101-1113 1125-1137 1164-1173 1209-1215 1236-1290 1310-1394 y3-21 42-51 99-114 162-192 249-273 318-325 414-425 450-462 483-495 675-690 735-741 1041-1050 1182-1200 1290-1310 b3-36 38-50 60-72 86-98 162-177 192-201 206-222 240-252 264-274 290-332 344-347 414-474 486-490 570-580 612-660 666-770 778-850 864-872 886-938 1032-1042 1120-1130 1166-1176 1190-1200 1208-1216 1236-1290 1294-1378 1388-1394',
  'p384-393 474-483 495-504 513-522 1140-1149 1200-1209 1347-1356 c318-322 1272-1281 1368-1377 y3-87 90-114 162-186 192-228 249-318 322-345 414-474 483-490 528-546 579-588 618-858 864-876 884-936 938-948 951-960 975-984 1041-1050 1101-1113 1120-1128 1164-1176 1182-1200 1209-1215 1233-1272 1281-1347 1356-1368 1377-1394 b3-50 52-78 86-104 162-180 192-222 240-252 264-316 324-344 414-474 486-494 537-546 570-580 612-660 666-770 778-850 864-872 886-938 1032-1042 1120-1130 1166-1176 1190-1200 1208-1216 1234-1290 1296-1346 1358-1374 1386-1394',
  'p135-144 162-171 318-327 384-393 474-483 495-522 525-534 579-588 618-627 708-717 1128-1137 1140-1149 1200-1209 1290-1299 1347-1356 y429-441 648-660 1317-1328 b420-434 639-654 1317-1327',
  'p3-12 111-120 135-144 162-171 180-201 213-222 255-273 318-327 372-381 384-393 402-411 465-483 495-522 525-537 540-549 561-570 579-588 618-627 696-705 708-717 732-741 777-786 978-987 990-999 1008-1017 1032-1041 1101-1110 1116-1125 1128-1137 1140-1149 1200-1209 1290-1302 1347-1362 1377-1394 y300-309 429-441 648-660 1317-1328 b300-310 420-434 639-654 1317-1327',
  'p3-12 24-33 36-45 78-87 90-108 111-123 135-147 150-174 180-201 213-222 252-273 318-327 372-393 402-411 432-444 465-483 492-522 525-573 576-594 600-615 618-633 684-693 696-717 732-741 777-786 807-819 831-840 909-918 924-933 936-945 948-960 963-975 978-1005 1008-1044 1050-1062 1074-1083 1101-1110 1114-1125 1128-1137 1140-1185 1200-1209 1281-1314 1341-1394 y282-297 300-312 336-357 648-660 795-807 822-828 840-846 1218-1236 1317-1328 b282-296 300-312 336-356 420-432 609-618 639-654 795-808 816-824 840-848 1218-1238 1317-1327',
  'p0-12 18-63 78-108 111-126 129-249 252-279 294-312 315-327 336-414 432-445 450-459 465-648 663-723 732-768 774-788 807-846 876-894 897-906 909-945 948-1005 1008-1065 1071-1092 1095-1113 1116-1125 1128-1185 1188-1197 1200-1209 1218-1236 1254-1266 1281-1319 1333-1394 y63-75 279-294 312-315 327-330 414-428 789-806 846-852 1239-1248 1269-1278 1320-1332 b64-69 108-111 249-252 279-294 327-330 414-432 789-804 1005-1008 1113-1116 1218-1238 1320-1332',
  'p0-906 909-1394']]];

let seed = 7;
const rnd = () => (seed = (seed * 16807) % 2147483647) / 2147483647;
const txt = (x, y, s, o = '') => `<text x="${x}" y="${y}" ${o}>${s}</text>`;
let g = `<defs><linearGradient id="rul" x2="0" y2="1"><stop stop-color="#f2f2f2"/><stop offset=".6" stop-color="#dedede"/><stop offset="1" stop-color="#a9a9a9"/></linearGradient></defs>
<rect x="366" y="155" width="1520" height="29" fill="url(#rul)"/><path d="M365.500 184V155.500H1887M366 183.500H1886.500V156" fill="none" stroke="#808080" stroke-width="1.500"/>
<path d="M366 164.500H1887" stroke="#000" stroke-width="1.300"/><path d="M366 168l6 9v5h-6z" fill="#eaa51c"/>
<rect x="365" y="190" width="1500" height="234" fill="#fff"/><rect x="365.500" y="190.500" width="1499" height="232" fill="none" stroke="#000" stroke-dasharray="1.300 2.700"/>`;
const F = 'font-family="Open Sans" font-size="13.500" text-anchor="middle"';
const lab = (x, y, s, w) => txt(x, y, s, `${F} textLength="${w}" lengthAdjust="spacingAndGlyphs"`);
const tick = (x, y) => `<path d="M${x} ${y - 2.500}v5" stroke="#000"/>`;
g += tick(366, 164.500) + lab(371, 181, '1', 6);
[500.500,636.500,771.500,907.500,1042.500,1178.500,1313.500,1448.500,1584.500,1719.500].forEach((x, i) => g += tick(x, 164.500) + lab(x + .5, 181, (i + 1) + '0m', i == 9 ? 30 : 23));
g += tick(1855.500, 164.500) + tick(1886, 164.500) + lab(1849.500, 181, '112 237 305', 69);
for (let r = 0; r < 10; r++) g += `<path d="M366 ${196.500 + r * 20}H1864" stroke="#b4b4b4" stroke-dasharray="1 2"/>`;
['mRNA (346)','mRNA (315)','mRNA (358)','mRNA (318)','misc_RNA (15)','misc_RNA (305)','misc_RNA (295)','dna_flex (8)'].forEach((s, i) =>
  g += txt(i < 4 ? 372 : 376, 210 + i * 20, s, 'font-family="Liberation Sans" font-size="14" fill="#c0c0c0"'));
const grad = { p: 'url(#gp)', y: 'url(#gy)', c: 'url(#gc)' };
tiles.forEach(([ox, s, rws]) => rws.forEach((row, r) => {
  const y = 198 + r * 20;
  let k = 'p', marks = '';
  row.split(' ').forEach(tok => {
    if (/[a-z]/.test(tok[0])) { k = tok[0]; tok = tok.slice(1); }
    const [a, b] = tok.split('-').map(v => ox + v / s);
    if (k != 'b') g += `<rect x="${a.toFixed(1)}" y="${y}" width="${(b - a).toFixed(1)}" height="16" fill="${grad[k]}" shape-rendering="crispEdges"/>`;
    else for (let x = Math.round(a), n = 0; x < b; x++, n++) {
      const m = n % 5, top = m == 0 ? rnd() * 3 : rnd() * 1.500;
      const h = m == 0 ? 8.500 : m == 3 && rnd() < .6 ? 3 + rnd() * 3 : 7 + rnd() * 2;
      if (rnd() > .07) marks += `M${x + .5} ${(y + top).toFixed(1)}V${(y + Math.min(h + top * .5, 9.500)).toFixed(1)}`;
    }
  });
  g += `<path d="${marks}" stroke="#000" shape-rendering="crispEdges"/>`;
}));
g += `<path d="M366 378.500H1864" stroke="#000"/>` + tick(366, 378.500) + lab(371, 395, '1', 6);
[498.500,632.500,765.500,899.500,1032.500,1166.500,1299.500,1433.500,1566.500,1700.500].forEach((x, i) => g += tick(x, 378.500) + lab(x + .5, 395, (i + 1) + '0m', i == 9 ? 30 : 23));
g += tick(1833.500, 378.500) + tick(1863.500, 378.500) + lab(1827.500, 395, '112 237 305', 69);
g += '<path d="M378 429v9l-7-4.500zM1851 429v9l7-4.500z" fill="#a0a0a0"/><rect x="1873" y="363" width="6" height="39" fill="#868686"/>';
$('overview').innerHTML = g;

const lines = ['GCAAGGTGTCAGGGCTGTTCAGATCCCGCCAAAGCGAGCCTCCGCTGCTTTTGATGGCTGTGA                   CGTTGCAACAGATGTATCATAGATC', 'TTCCCATAATTATCTGACCTGTTACACCGTGTCAGTCTCCCGCCAAACATGGTGTTTTTATGT                   TTCGGCTTTGATCACGCGGTATTTT'];
const comp = { A: 'T', T: 'A', C: 'G', G: 'C', ' ': ' ' };
let d = '';
lines.forEach((line, r) => {
  const y = r * 95;
  [line, [...line].map(c => comp[c]).join('')].forEach((s, j) => [...s].forEach((c, i) => {
    if (c != ' ') d += txt(372.500 + 14 * i, 483 + y + j * (r ? 39 : 40), c, 'font-family="Liberation Serif" font-size="18" text-anchor="middle"');
  }));
  d += `<path d="M372 ${489.500 + y}H1858" stroke="#000" stroke-width="1.200"/>` + tick(372.500, 489.500 + y) + tick(1857.500, 489.500 + y);
  const first = r ? 108 : 1;
  for (let n = r ? 110 : 5; n <= (r ? 210 : 105); n += 5) {
    const x = 372.500 + 14 * (n - first);
    d += tick(x, 489.500 + y);
    if (n != 110 && n != 105) d += lab(x, 506 + y, n, n > 99 ? 20 : n > 9 ? 13.500 : 6.500);
  }
  d += r ? lab(385, 506 + y, '108', 20) + lab(1844, 506 + y, '214', 20) : lab(378, 506, '1', 6) + lab(1845, 506, '107', 20);
});
$('detail').innerHTML = d;

// Spread each label over its nominal advance width; repeated once fonts and styles have settled.
const labels = [...document.querySelectorAll('[data-w]')];
labels.forEach(e => e.classList.add('whitespace-nowrap', 'shrink-0'));
const fit = () => {
  labels.forEach(e => e.style.letterSpacing = '0px');
  const widths = labels.map(e => e.getBoundingClientRect().width);
  labels.forEach((e, i) => e.style.letterSpacing = (e.dataset.w - widths[i]) / e.textContent.length + 'px');
};
fit();
addEventListener('load', fit);
document.fonts.ready.then(fit);
requestAnimationFrame(() => requestAnimationFrame(fit));
[30, 120, 300].forEach(t => setTimeout(fit, t));
</script>
</body>
</html>
